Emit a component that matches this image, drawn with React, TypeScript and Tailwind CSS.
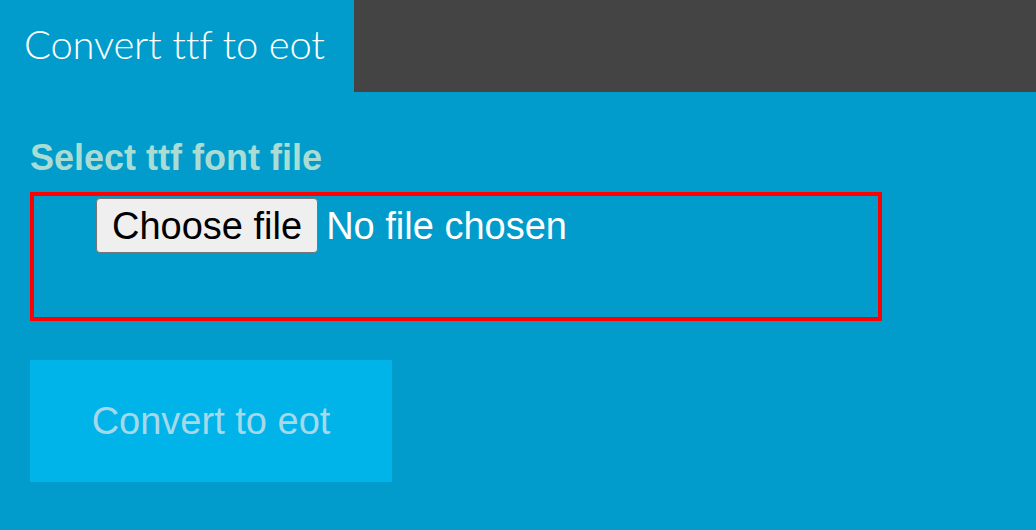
export default function App() {
  return (
    <div className="h-[530px] w-[1036px] overflow-hidden bg-[#019ccb]" style={{ fontFamily: '"Liberation Sans", Arial, sans-serif' }}>
      {/* tab bar */}
      <div className="flex h-[92px]">
        <div className="flex w-[354px] items-center pl-6 pb-1">
          <h1 className="text-[40px] font-light tracking-[-0.2px] text-white" style={{ fontFamily: 'Lato, "Open Sans", sans-serif' }}>
            Convert ttf to eot
          </h1>
        </div>
        <div className="flex-1 bg-[#444444]" />
      </div>

      <div className="px-[30px] pt-[46px]">
        <label className="block text-[36px] font-bold leading-[40px] text-[#a9dcd4]">Select ttf font file</label>

        <div className="mt-[14px] h-[129px] w-[852px] border-[4px] border-[#ff0000] pl-[62px] pt-[2px]">
          <div className="flex items-center gap-[8px]">
            <button className="h-[55px] rounded-[4px] border border-[#767676] bg-[#efefef] px-[15px] text-[38px] leading-none text-black">
              Choose file
            </button>
            <span className="text-[38px] leading-none text-white">No file chosen</span>
          </div>
        </div>

        <button className="mt-[39px] flex h-[122px] w-[362px] items-center justify-center bg-[#00b4e9] text-[38px] text-[#a6d8ea]">
          Convert to eot
        </button>
      </div>
    </div>
  );
}
